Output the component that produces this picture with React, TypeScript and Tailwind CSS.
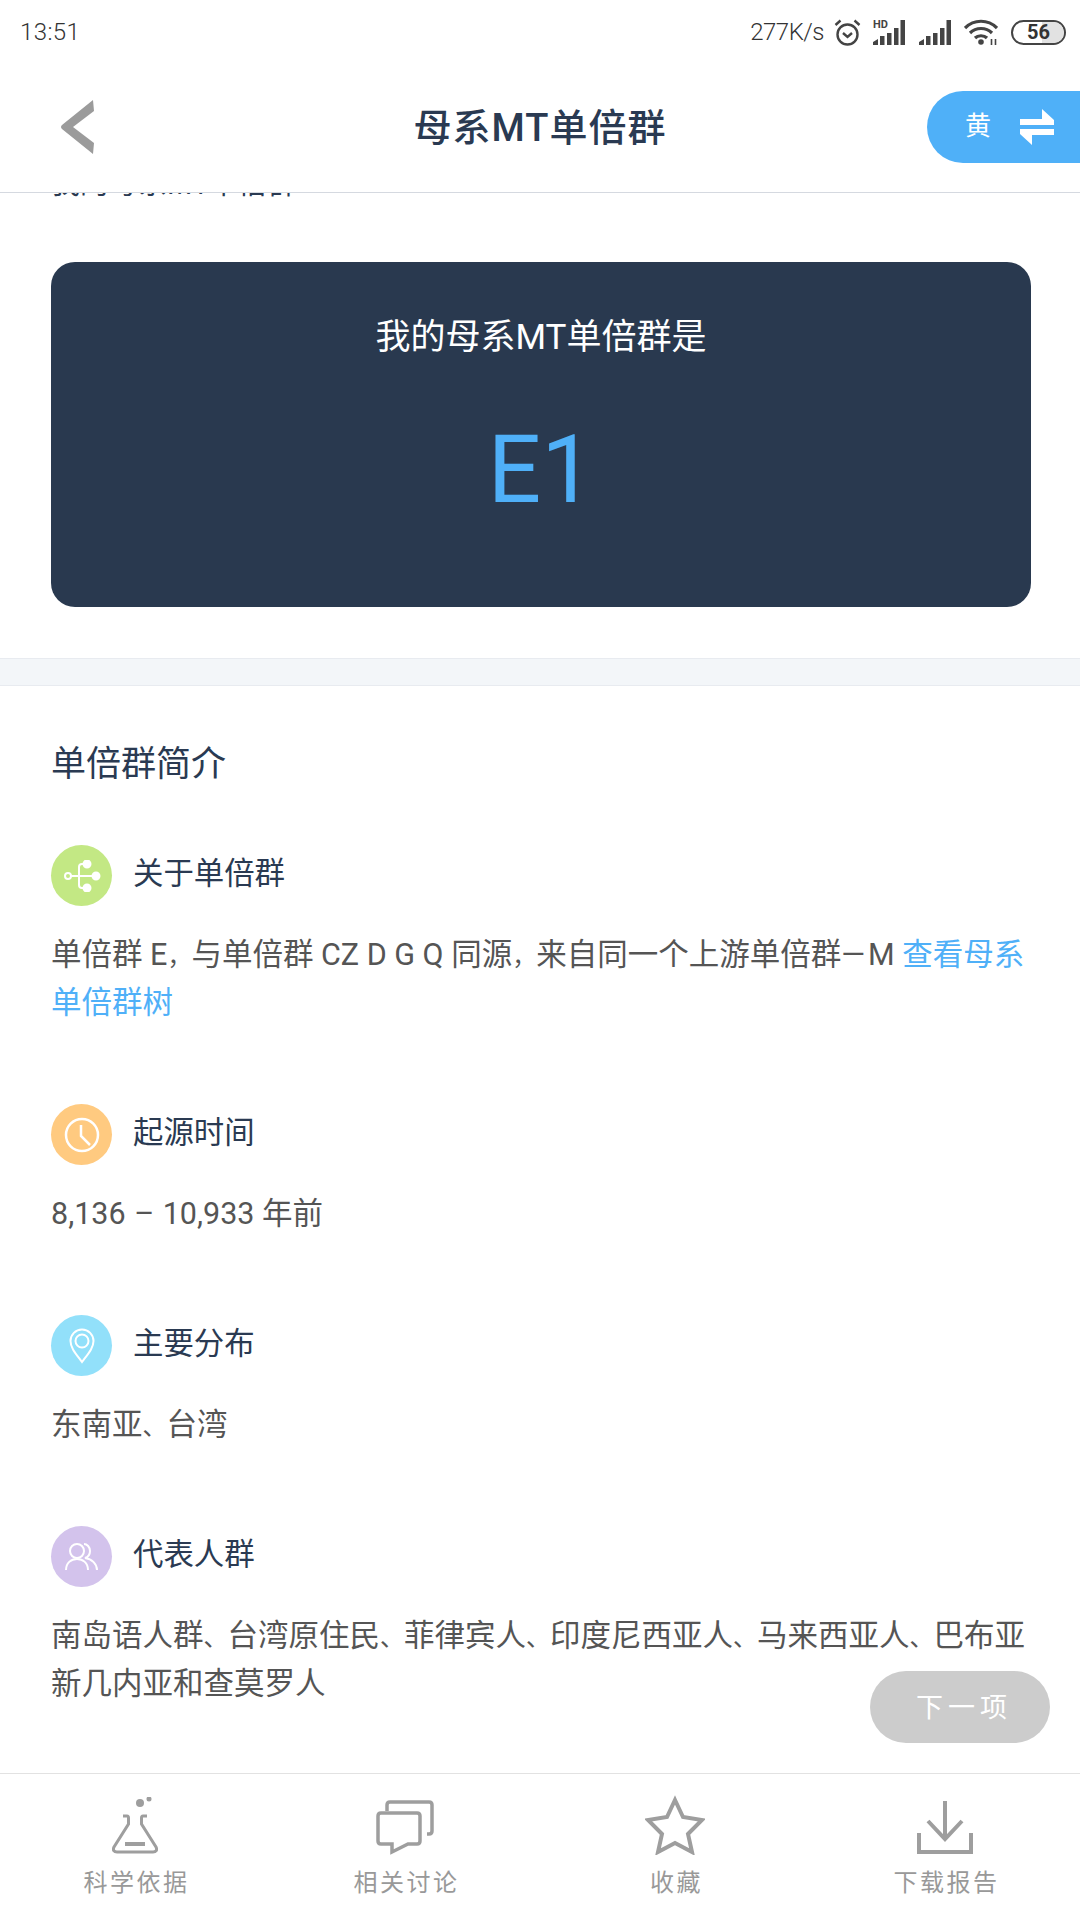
const sans = '"Roboto", "Noto Sans CJK SC", sans-serif';

function StatusIcons() {
  return (
    <div className="flex items-center">
      <span className="text-[24px] tracking-[-0.5px] text-[#333] font-light mr-[10px]">277K/s</span>
      {/* 闹钟 */}
      <svg width="27" height="27" viewBox="0 0 27 27" fill="none" stroke="#444" strokeWidth="2.4" className="mr-[12px]">
        <circle cx="13.5" cy="15.5" r="10" />
        <path d="M9 14l4.5 4 4.500-4" />
        <path d="M1.500 6l5-4.500M25.500 6l-5-4.500" />
      </svg>
      {/* 信号 HD */}
      <div className="relative w-[32px] h-[25px] mr-[14px]">
        <span className="absolute left-0 top-[-1px] text-[11px] font-bold text-[#444] leading-none">HD</span>
        <svg width="32" height="25" viewBox="0 0 32 25" fill="#444">
          <path d="M0 25v-3l5-3v6zM7 25v-9h4.500v9zM14 25v-12h4.500v12zM21 25v-17h4.500v17zM27.500 25v-25h4.500v25z" />
        </svg>
      </div>
      <svg width="32" height="25" viewBox="0 0 32 25" fill="#444" className="mr-[13px]">
        <path d="M0 25v-3l5-3v6zM7 25v-9h4.500v9zM14 25v-12h4.500v12zM21 25v-17h4.500v17zM27.500 25v-25h4.500v25z" />
      </svg>
      {/* wifi */}
      <svg width="34" height="26" viewBox="0 0 34 26" fill="none" stroke="#444" strokeWidth="3.200" className="mr-[13px]">
        <path d="M1 9c9-9 23-9 32 0M6 14c6-6 16-6 22 0M11 19c3-3 9-3 12 0" />
        <circle cx="17" cy="23" r="2.800" fill="#444" stroke="none" />
        <path d="M27.500 20v6M31.500 20v6" strokeWidth="1.600" />
      </svg>
      {/* 电量 */}
      <div className="relative w-[55px] h-[25px] rounded-full border-2 border-[#444] overflow-hidden flex items-center justify-center">
        <div className="absolute right-0 top-0 bottom-0 w-[44%] bg-[#e2e2e2]" />
        <span className="relative text-[20px] font-bold text-[#333] leading-none">56</span>
      </div>
    </div>
  );
}

function Section({ icon, color, title, children, className }: { icon: React.ReactNode; color: string; title: string; children: React.ReactNode; className: string }) {
  return (
    <div className={className}>
      <div className="flex items-center h-[61px]">
        <div className={"w-[61px] h-[61px] rounded-full flex items-center justify-center " + color}>{icon}</div>
        <span className="ml-[21px] mb-[3px] text-[30.4px] text-[#2a3a52]">{title}</span>
      </div>
      <div className="mt-[25px] text-[30.5px] leading-[48px] text-[#555]">{children}</div>
    </div>
  );
}

// 标点比字体默认的窄一点
function Punct({ children }: { children: string }) {
  return <span className="text-[24px] leading-none">{children}</span>;
}

function Tab({ label, icon }: { label: string; icon: React.ReactNode }) {
  return (
    <div className="flex-1 flex flex-col items-center">
      <div className="h-[81px] flex items-end justify-center">{icon}</div>
      <span className="mt-[13px] pl-[3px] text-[24px] leading-[30px] tracking-[2.5px] text-[#999]">{label}</span>
    </div>
  );
}

export default function App() {
  return (
    <div className="w-[1080px] h-[1920px] bg-white flex flex-col overflow-hidden" style={{ fontFamily: sans }}>
      {/* 状态栏 */}
      <div className="h-[64px] shrink-0 flex items-center justify-between pl-[20px] pr-[14px]">
        <span className="text-[24px] tracking-[0.4px] font-light text-[#333]">13:51</span>
        <StatusIcons />
      </div>

      {/* 标题栏 */}
      <div className="h-[129px] shrink-0 border-b border-[#d5d9e0] relative z-10 bg-white grid grid-cols-[1fr_auto_1fr] items-center">
        <button className="ml-[60px] mb-[2px] justify-self-start">
          <svg width="36" height="56" viewBox="0 0 36 56" fill="#9b9b9b">
            <path d="M33 1L34 12L13 28L34 44L33 55L2 30Q0 28 2 26Z" />
          </svg>
        </button>
        <span className="text-[38px] font-medium text-[#2a3a52] tracking-[1px]">母系MT单倍群</span>
        <div className="justify-self-end w-[153px] h-[72px] mb-[3px] rounded-l-full bg-[#4fb0f8] flex items-center pl-[38px]">
          <span className="text-[26px] text-white">黄</span>
          <svg width="36" height="36" viewBox="0 0 36 36" fill="white" className="ml-[28px]">
            <path d="M23 0l12 11v5H1V10h22zM13 36L1 25v-5h34v6H13z" />
          </svg>
        </div>
      </div>

      {/* 内容 */}
      <div className="flex-1 relative overflow-hidden">
        <div className="-mt-[27px] px-[51px] h-[36px] text-[29px] leading-[36px] text-[#2a3a52]">我的母系MT单倍群</div>
        <div className="ml-[51px] mr-[49px] mt-[60px] h-[345px] rounded-[24px] bg-[#29394f] flex flex-col items-center">
          <span className="mt-[55px] text-[35px] leading-[42px] text-white">我的母系MT单倍群是</span>
          <span className="mt-[51px] text-[94px] leading-[120px] text-[#4fb0f8]">E1</span>
        </div>

        <div className="mt-[51px] h-[28px] bg-[#f3f6f9] border-y border-[#e8ebf0]" />

        <div className="px-[51px]">
          <div className="mt-[57px] text-[35px] leading-[44px] text-[#2a3a52]">单倍群简介</div>
          <Section
            className="mt-[58px]"
            color="bg-[#c3e884]"
            title="关于单倍群"
            icon={
              <svg width="38" height="32" viewBox="0 0 38 32" fill="none" stroke="white" strokeWidth="2">
                <circle cx="5" cy="16" r="3" />
                <path d="M8 16h24M22 4h-3c-2 0-3 1-3 3v18c0 2 1 3 3 3h3" />
                <circle cx="24" cy="4" r="3.500" fill="white" />
                <circle cx="33" cy="16" r="3.500" fill="white" />
                <circle cx="24" cy="28" r="3.500" fill="white" />
              </svg>
            }
          >
            单倍群 E<Punct>，</Punct>与单倍群 CZ D G Q 同源<Punct>，</Punct>来自同一个上游单倍群<span className="tracking-[3px]">—</span>M <span className="text-[#4fb0f8]">查看母系</span>
            <br />
            <span className="text-[#4fb0f8]">单倍群树</span>
          </Section>
          <Section
            className="mt-[77px]"
            color="bg-[#ffca80]"
            title="起源时间"
            icon={
              <svg width="36" height="36" viewBox="0 0 36 36" fill="none" stroke="white" strokeWidth="2.500">
                <circle cx="18" cy="18" r="16" />
                <path d="M17 8v11l9 9" />
              </svg>
            }
          >
            8,136 <span className="px-[1px]">–</span> 10,933 年前
          </Section>
          <Section
            className="mt-[77px]"
            color="bg-[#92e0fa]"
            title="主要分布"
            icon={
              <svg width="26" height="36" viewBox="0 0 26 36" fill="none" stroke="white" strokeWidth="2">
                <path d="M13 34C7 26 1.500 20 1.500 13a11.500 11.500 0 0 1 23 0c0 7-5.500 13-11.500 21z" />
                <circle cx="13" cy="13" r="6.500" />
              </svg>
            }
          >
            东南亚<Punct>、</Punct>台湾
          </Section>
          <Section
            className="mt-[77px]"
            color="bg-[#d3c3ec]"
            title="代表人群"
            icon={
              <svg width="34" height="30" viewBox="0 0 34 30" fill="none" stroke="white" strokeWidth="2">
                <circle cx="12" cy="9" r="7" />
                <path d="M1 28c0-7 5-11 11-11s11 4 11 11" />
                <path d="M19 2c3 0 6 3 6 7s-2 6-5 7c7 1 12 6 12 12" />
              </svg>
            }
          >
            南岛语人群<Punct>、</Punct>台湾原住民<Punct>、</Punct>菲律宾人<Punct>、</Punct>印度尼西亚人<Punct>、</Punct>马来西亚人<Punct>、</Punct>巴布亚
            <br />
            新几内亚和查莫罗人
          </Section>
        </div>

        <button className="absolute right-[30px] bottom-[30px] w-[180px] h-[72px] pt-[2px] pl-[8px] rounded-full bg-[#cccccc] text-white text-[27px] tracking-[5px]">
          下一项
        </button>
      </div>

      {/* 底部栏 */}
      <div className="h-[147px] shrink-0 border-t border-[#e2e2e2] bg-white flex">
        <Tab
          label="科学依据"
          icon={
            <svg width="46" height="58" viewBox="0 0 46 58" fill="none" stroke="#9e9e9e" strokeWidth="3">
              <path d="M11 19h4c1 0 1.500 1 1.500 2v6L2 50c-1.500 3 0 5 3 5h36c3 0 4.500-2 3-5L29.500 27v-6c0-1 .5-2 1.500-2h4" />
              <path d="M13 47h20" strokeWidth="4" />
              <circle cx="28" cy="6" r="4" fill="#9e9e9e" stroke="none" />
              <circle cx="37" cy="2" r="2.500" fill="#9e9e9e" stroke="none" />
            </svg>
          }
        />
        <Tab
          label="相关讨论"
          icon={
            <svg width="60" height="56" viewBox="0 0 60 56" fill="none" stroke="#9e9e9e" strokeWidth="3.500">
              <path d="M12 12V6c0-2 1-3 3-3h39c2 0 3 1 3 3v26c0 2-1 3-3 3h-2" />
              <path d="M6 14h36c2 0 3 1 3 3v25c0 2-1 3-3 3H33l-16 8v-8H6c-2 0-3-1-3-3V17c0-2 1-3 3-3z" />
            </svg>
          }
        />
        <Tab
          label="收藏"
          icon={
            <svg width="60" height="60" viewBox="0 0 60 58" fill="none" stroke="#9e9e9e" strokeWidth="4">
              <path d="M30 4l8 17 19 3-14 14 4 18-17-9-17 9 4-18L3 24l19-3z" />
            </svg>
          }
        />
        <Tab
          label="下载报告"
          icon={
            <svg width="56" height="56" viewBox="0 0 56 56" fill="none" stroke="#9e9e9e" strokeWidth="4">
              <path d="M28 2v38M11 22l17 18 17-18" />
              <path d="M2 34v19h52V34" />
            </svg>
          }
        />
      </div>
    </div>
  );
}
